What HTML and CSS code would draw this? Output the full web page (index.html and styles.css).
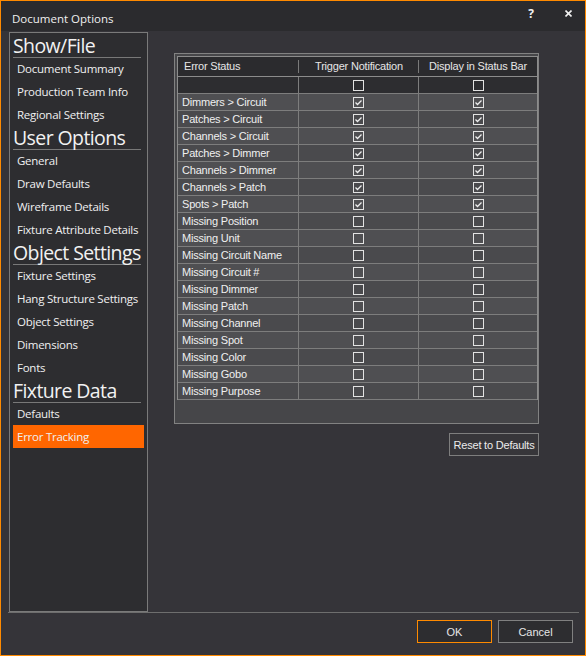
FILE: index.html
```html
<!DOCTYPE html>
<html lang="en">
<head>
  <meta charset="UTF-8">
  <title>Document Options</title>
  <link rel="stylesheet" href="styles.css">
</head>
<body>
  <div class="window">
    <div class="titlebar">
      <span class="title">Document Options</span>
      <div class="tb-controls">
        <span class="tb-btn help">?</span>
        <span class="tb-btn close">
          <svg width="7" height="7" viewBox="0 0 7 7"><path d="M0.5 0.5 L6.5 6.5 M6.5 0.5 L0.5 6.5" stroke="#f2f2f2" stroke-width="1.6" fill="none"/></svg>
        </span>
      </div>
    </div>

    <div class="body">
      <div class="sidebar">
        <div class="heading">Show/File</div>
        <div class="item">Document Summary</div>
        <div class="item">Production Team Info</div>
        <div class="item">Regional Settings</div>
        <div class="heading">User Options</div>
        <div class="item">General</div>
        <div class="item">Draw Defaults</div>
        <div class="item">Wireframe Details</div>
        <div class="item">Fixture Attribute Details</div>
        <div class="heading">Object Settings</div>
        <div class="item">Fixture Settings</div>
        <div class="item">Hang Structure Settings</div>
        <div class="item">Object Settings</div>
        <div class="item">Dimensions</div>
        <div class="item">Fonts</div>
        <div class="heading">Fixture Data</div>
        <div class="item">Defaults</div>
        <div class="item active">Error Tracking</div>
      </div>

      <div class="main">
        <div class="grid-frame">
          <div class="grid">
            <div class="row head">
              <div class="cell c1">Error Status</div>
              <div class="cell c2">Trigger Notification</div>
              <div class="cell c3">Display in Status Bar</div>
            </div>
            <div class="row blank">
              <div class="cell c1"></div>
              <div class="cell c2"><span class="cb"></span></div>
              <div class="cell c3"><span class="cb"></span></div>
            </div>
            <div class="row">
              <div class="cell c1">Dimmers &gt; Circuit</div>
              <div class="cell c2"><span class="cb"><svg width="9" height="9" viewBox="0 0 9 9"><path d="M1.5 4.5 L3.5 6.5 L7.5 2.5" stroke="#ececec" stroke-width="1.3" fill="none"/></svg></span></div>
              <div class="cell c3"><span class="cb"><svg width="9" height="9" viewBox="0 0 9 9"><path d="M1.5 4.5 L3.5 6.5 L7.5 2.5" stroke="#ececec" stroke-width="1.3" fill="none"/></svg></span></div>
            </div>
            <div class="row">
              <div class="cell c1">Patches &gt; Circuit</div>
              <div class="cell c2"><span class="cb"><svg width="9" height="9" viewBox="0 0 9 9"><path d="M1.5 4.5 L3.5 6.5 L7.5 2.5" stroke="#ececec" stroke-width="1.3" fill="none"/></svg></span></div>
              <div class="cell c3"><span class="cb"><svg width="9" height="9" viewBox="0 0 9 9"><path d="M1.5 4.5 L3.5 6.5 L7.5 2.5" stroke="#ececec" stroke-width="1.3" fill="none"/></svg></span></div>
            </div>
            <div class="row">
              <div class="cell c1">Channels &gt; Circuit</div>
              <div class="cell c2"><span class="cb"><svg width="9" height="9" viewBox="0 0 9 9"><path d="M1.5 4.5 L3.5 6.5 L7.5 2.5" stroke="#ececec" stroke-width="1.3" fill="none"/></svg></span></div>
              <div class="cell c3"><span class="cb"><svg width="9" height="9" viewBox="0 0 9 9"><path d="M1.5 4.5 L3.5 6.5 L7.5 2.5" stroke="#ececec" stroke-width="1.3" fill="none"/></svg></span></div>
            </div>
            <div class="row">
              <div class="cell c1">Patches &gt; Dimmer</div>
              <div class="cell c2"><span class="cb"><svg width="9" height="9" viewBox="0 0 9 9"><path d="M1.5 4.5 L3.5 6.5 L7.5 2.5" stroke="#ececec" stroke-width="1.3" fill="none"/></svg></span></div>
              <div class="cell c3"><span class="cb"><svg width="9" height="9" viewBox="0 0 9 9"><path d="M1.5 4.5 L3.5 6.5 L7.5 2.5" stroke="#ececec" stroke-width="1.3" fill="none"/></svg></span></div>
            </div>
            <div class="row">
              <div class="cell c1">Channels &gt; Dimmer</div>
              <div class="cell c2"><span class="cb"><svg width="9" height="9" viewBox="0 0 9 9"><path d="M1.5 4.5 L3.5 6.5 L7.5 2.5" stroke="#ececec" stroke-width="1.3" fill="none"/></svg></span></div>
              <div class="cell c3"><span class="cb"><svg width="9" height="9" viewBox="0 0 9 9"><path d="M1.5 4.5 L3.5 6.5 L7.5 2.5" stroke="#ececec" stroke-width="1.3" fill="none"/></svg></span></div>
            </div>
            <div class="row">
              <div class="cell c1">Channels &gt; Patch</div>
              <div class="cell c2"><span class="cb"><svg width="9" height="9" viewBox="0 0 9 9"><path d="M1.5 4.5 L3.5 6.5 L7.5 2.5" stroke="#ececec" stroke-width="1.3" fill="none"/></svg></span></div>
              <div class="cell c3"><span class="cb"><svg width="9" height="9" viewBox="0 0 9 9"><path d="M1.5 4.5 L3.5 6.5 L7.5 2.5" stroke="#ececec" stroke-width="1.3" fill="none"/></svg></span></div>
            </div>
            <div class="row">
              <div class="cell c1">Spots &gt; Patch</div>
              <div class="cell c2"><span class="cb"><svg width="9" height="9" viewBox="0 0 9 9"><path d="M1.5 4.5 L3.5 6.5 L7.5 2.5" stroke="#ececec" stroke-width="1.3" fill="none"/></svg></span></div>
              <div class="cell c3"><span class="cb"><svg width="9" height="9" viewBox="0 0 9 9"><path d="M1.5 4.5 L3.5 6.5 L7.5 2.5" stroke="#ececec" stroke-width="1.3" fill="none"/></svg></span></div>
            </div>
            <div class="row">
              <div class="cell c1">Missing Position</div>
              <div class="cell c2"><span class="cb"></span></div>
              <div class="cell c3"><span class="cb"></span></div>
            </div>
            <div class="row">
              <div class="cell c1">Missing Unit</div>
              <div class="cell c2"><span class="cb"></span></div>
              <div class="cell c3"><span class="cb"></span></div>
            </div>
            <div class="row">
              <div class="cell c1">Missing Circuit Name</div>
              <div class="cell c2"><span class="cb"></span></div>
              <div class="cell c3"><span class="cb"></span></div>
            </div>
            <div class="row">
              <div class="cell c1">Missing Circuit #</div>
              <div class="cell c2"><span class="cb"></span></div>
              <div class="cell c3"><span class="cb"></span></div>
            </div>
            <div class="row">
              <div class="cell c1">Missing Dimmer</div>
              <div class="cell c2"><span class="cb"></span></div>
              <div class="cell c3"><span class="cb"></span></div>
            </div>
            <div class="row">
              <div class="cell c1">Missing Patch</div>
              <div class="cell c2"><span class="cb"></span></div>
              <div class="cell c3"><span class="cb"></span></div>
            </div>
            <div class="row">
              <div class="cell c1">Missing Channel</div>
              <div class="cell c2"><span class="cb"></span></div>
              <div class="cell c3"><span class="cb"></span></div>
            </div>
            <div class="row">
              <div class="cell c1">Missing Spot</div>
              <div class="cell c2"><span class="cb"></span></div>
              <div class="cell c3"><span class="cb"></span></div>
            </div>
            <div class="row">
              <div class="cell c1">Missing Color</div>
              <div class="cell c2"><span class="cb"></span></div>
              <div class="cell c3"><span class="cb"></span></div>
            </div>
            <div class="row">
              <div class="cell c1">Missing Gobo</div>
              <div class="cell c2"><span class="cb"></span></div>
              <div class="cell c3"><span class="cb"></span></div>
            </div>
            <div class="row">
              <div class="cell c1">Missing Purpose</div>
              <div class="cell c2"><span class="cb"></span></div>
              <div class="cell c3"><span class="cb"></span></div>
            </div>
          </div>
        </div>
        <button class="reset">Reset to Defaults</button>
      </div>
    </div>

    <div class="separator"></div>
    <div class="buttons">
      <button class="btn ok">OK</button>
      <button class="btn">Cancel</button>
    </div>
  </div>
</body>
</html>
```

FILE: styles.css
```css
body{
  margin: 0;
  background: #353439;
}

.window{
  width: 586px;
  height: 656px;
  box-sizing: border-box;
  border: 1px solid #ff8a00;
  background: #353439;
  display: flex;
  flex-direction: column;
  font-family: "Liberation Sans", Arial, sans-serif;
  color: #ececec;
}

/* title bar */
.titlebar{
  flex: none;
  height: 30px;
  background: #2b2b2e;
  display: flex;
  align-items: flex-start;
}
.titlebar .title{
  margin: 11px 0 0 11px;
  font-family: "Open Sans", sans-serif;
  font-size: 11.5px;
  line-height: 14px;
  color: #f0f0f0;
}
.tb-controls{
  margin-left: auto;
  margin-right: 7px;
  display: flex;
  gap: 17px;
}
.tb-btn{
  width: 20px;
  height: 14px;
  margin-top: 5px;
  display: flex;
  align-items: center;
  justify-content: center;
  font-family: "Open Sans", sans-serif;
  font-weight: 700;
  font-size: 12px;
  color: #f2f2f2;
}

/* body */
.body{
  flex: none;
  height: 581px;
  box-sizing: border-box;
  padding: 1px 0 0 8px;
  display: flex;
}

.sidebar{
  width: 139px;
  height: 580px;
  box-sizing: border-box;
  border: 1px solid #7a7a7a;
  background: #2d2d30;
  padding: 2px 2px 0 3px;
  font-family: "Open Sans", sans-serif;
}
.sidebar .heading{
  height: 22px;
  line-height: 22px;
  margin-right: 4px;
  border-bottom: 1px solid #787878;
  font-size: 19.5px;
  letter-spacing: -0.6px;
  color: #f2f2f2;
  white-space: nowrap;
}
.sidebar .item{
  height: 23px;
  line-height: 21px;
  padding-left: 4px;
  font-size: 11.5px;
  letter-spacing: -0.25px;
  color: #f0f0f0;
  white-space: nowrap;
}
.sidebar .item.active{
  margin: -1px 1px 1px 0;
  line-height: 23px;
  background: #ff6600;
}

.main{
  margin: 21px 0 0 26px;
  width: 365px;
  display: flex;
  flex-direction: column;
  align-items: flex-end;
}

.grid-frame{
  width: 365px;
  height: 371px;
  box-sizing: border-box;
  border: 1px solid #828282;
  background: #464649;
  padding: 2px 0 0 2px;
}
.grid{
  width: 361px;
  box-sizing: border-box;
  border: 1px solid #8c8c8c;
  border-bottom: none;
  font-size: 11px;
  letter-spacing: -0.2px;
}
.row{
  display: flex;
  height: 17px;
  background: #4a4a4d;
}
.row:nth-child(odd){
  background: #4f4f52;
}
.cell{
  box-sizing: border-box;
  height: 17px;
  line-height: 16px;
  border-bottom: 1px solid #7d7d7d;
  color: #f0f0f0;
  white-space: nowrap;
}
.c1{
  width: 121px;
  padding-left: 4px;
  border-right: 1px solid #7d7d7d;
}
.c2{
  width: 120px;
  border-right: 1px solid #7d7d7d;
}
.c3{
  width: 118px;
}
.c2, .c3{
  display: flex;
  align-items: center;
  justify-content: center;
}

.row.head{
  height: 20px;
  background: #2b2b2e;
}
.row.head .cell{
  height: 20px;
  line-height: 19px;
  border-right: none;
  border-bottom: 1px solid #8c8c8c;
  color: #e6e6e6;
}
.row.head .c1{
  padding-left: 6px;
}
.row.head .c1, .row.head .c2{
  background: linear-gradient(#7a7a7a, #7a7a7a) right center / 1px 13px no-repeat;
}
.row.blank{
  background: #2d2d30;
}

.cb{
  width: 11px;
  height: 11px;
  box-sizing: border-box;
  border: 1px solid #e2e2e2;
  display: flex;
  align-items: center;
  justify-content: center;
}
.cb svg{
  display: block;
}

.reset{
  margin-top: 9px;
  width: 90px;
  height: 23px;
  padding: 0;
  box-sizing: border-box;
  border: 1px solid #7e7e7e;
  background: #37363a;
  color: #ececec;
  font-family: "Liberation Sans", Arial, sans-serif;
  font-size: 11px;
  letter-spacing: -0.2px;
}

/* footer */
.separator{
  flex: none;
  height: 1px;
  margin: 0 6px 0 7px;
  background: #6e6e6e;
}
.buttons{
  display: flex;
  justify-content: flex-end;
  gap: 6px;
  padding: 7px 12px 0 0;
}
.btn{
  width: 75px;
  height: 23px;
  padding: 0;
  box-sizing: border-box;
  border: 1px solid #808080;
  background: #2d2d30;
  color: #e6e6e6;
  font-family: "Liberation Sans", Arial, sans-serif;
  font-size: 11px;
}
.btn.ok{
  border-color: #ff8a00;
}
```
